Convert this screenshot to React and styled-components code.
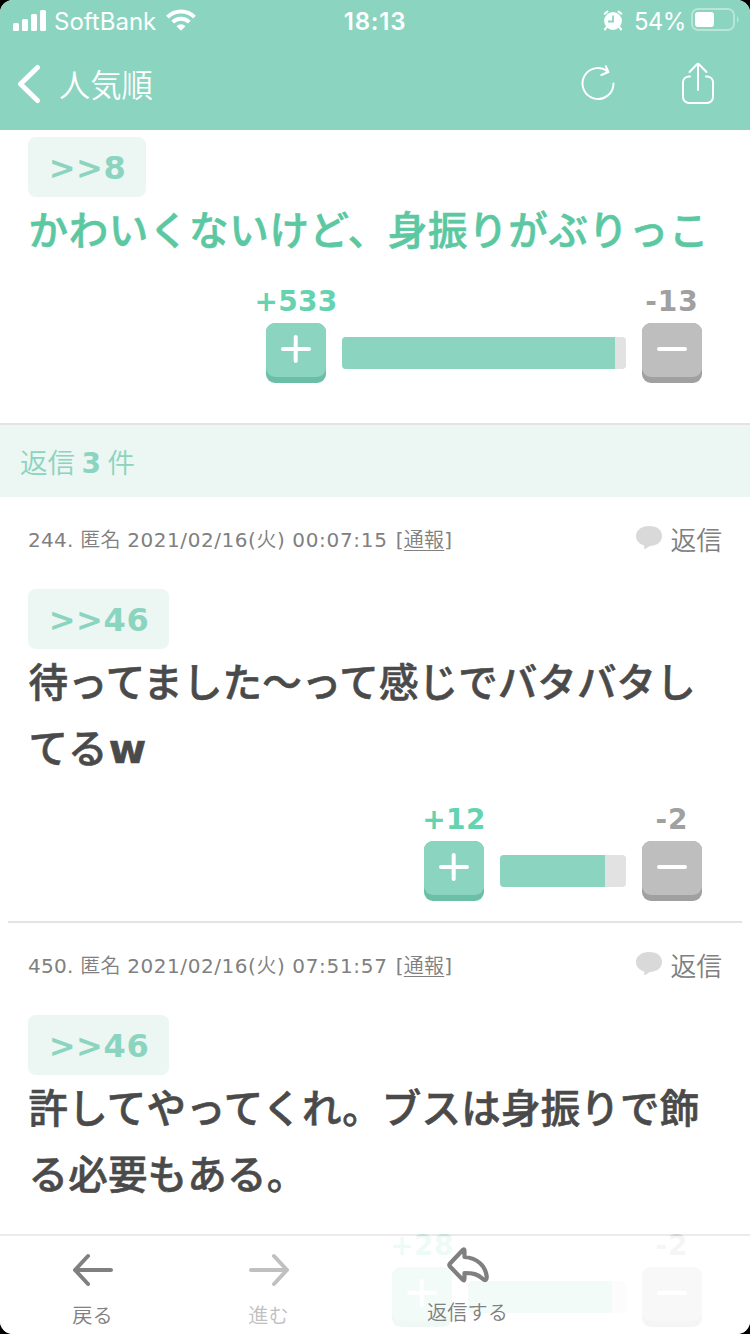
import React from "react";
import styled, { createGlobalStyle } from "styled-components";

const mint = "#8bd4bf";
const pale = "#ecf6f3";

const GlobalStyle = createGlobalStyle`
  * { box-sizing: border-box; }
  body { margin: 0; background: #000; font-family: "DejaVu Sans", "Noto Sans CJK JP", sans-serif; }
`;

const Screen = styled.div`
  position: relative;
  width: 750px;
  height: 1334px;
  border-radius: 13px;
  overflow: hidden;
  background: #fff;
`;

const Header = styled.header`
  height: 130px;
  background: ${mint};
  color: #fff;
`;

const StatusBar = styled.div`
  display: grid;
  grid-template-columns: 1fr auto 1fr;
  align-items: center;
  height: 40px;
  padding: 0 11px 0 13px;
  font-family: Inter, sans-serif;
  font-size: 24px;
  line-height: 38px;
`;

const StatusGroup = styled.div`
  display: flex;
  align-items: center;
  justify-content: ${(p) => (p.$end ? "flex-end" : "flex-start")};
  svg { display: block; flex: none; margin-top: -2px; }
`;

const StatusText = styled.span`
  margin: 3px ${(p) => p.$right}px 0 ${(p) => p.$left}px;
  letter-spacing: ${(p) => p.$spacing}px;
`;

const Clock = styled.div`
  margin: 2px 2px 0 0;
  font-weight: 600;
  font-size: 24px;
  letter-spacing: 0.8px;
`;

const NavBar = styled.nav`
  display: flex;
  align-items: center;
  height: 90px;
  padding: 0 35px 2px 17px;
  svg { display: block; }
`;

const NavTitle = styled.span`
  flex: 1;
  margin: -1px 0 0 18px;
  font: 350 31.3px/46px "Noto Sans CJK JP", sans-serif;
`;

const NavIcon = styled.div`
  margin-left: ${(p) => p.$left || 0}px;
`;

const TopComment = styled.section`
  height: 295px;
  padding: 7px 0 0 28px;
  border-bottom: 2px solid #e3e3e3;
`;

const ReplyCount = styled.h2`
  height: 72px;
  margin: 0;
  padding: 0 0 0 20px;
  background: ${pale};
  color: ${mint};
  font: 350 27.5px/73px "Noto Sans CJK JP", sans-serif;
  b {
    margin: 0 6.5px;
    font: bold 28px "DejaVu Sans", sans-serif;
  }
`;

const Reply = styled.article`
  height: 426px;
  margin: 0 8px;
  padding: 0 0 0 20px;
  border-bottom: 2px solid #e3e3e3;
`;

const Meta = styled.div`
  display: flex;
  align-items: center;
  height: 83px;
  margin-bottom: 9px;
  padding-right: 20px;
  color: #808080;
  font-size: 20px;
  white-space: nowrap;
`;

const MetaText = styled.span`
  flex: 1;
  letter-spacing: 0.25px;
`;

const Kanji = styled.span`
  font-weight: 350;
  font-family: "Noto Sans CJK JP", sans-serif;
`;

const DateText = styled.span`
  letter-spacing: 0.55px;
`;

const TimeText = styled.span`
  margin-right: 1px;
  letter-spacing: 0.7px;
`;

const ReportLink = styled(Kanji)`
  text-decoration: underline 1px;
  text-underline-offset: 3px;
`;

const ReplyLink = styled.span`
  display: flex;
  align-items: center;
  gap: 7px;
  font: 350 25.8px/40px "Noto Sans CJK JP", sans-serif;
  svg { margin-top: -2px; }
`;

const Anchor = styled.div`
  width: ${(p) => p.$width}px;
  height: 60px;
  padding-left: 20.7px;
  border-radius: 8px;
  background: ${pale};
  color: ${mint};
  font-size: 32px;
  font-weight: bold;
  line-height: 62px;
  letter-spacing: 0.6px;
`;

const Body = styled.p`
  margin: -2px 0 2px 0.5px;
  color: ${(p) => p.$color || "#4a4a4a"};
  font: 500 39.5px/66px "Noto Sans CJK JP", sans-serif;
  -webkit-text-stroke: 0.6px currentColor;
  letter-spacing: ${(p) => p.$spacing || 0}px;
  white-space: pre-line;
  b {
    margin-left: 1px;
    font: bold 40.5px/1 "DejaVu Sans", sans-serif;
  }
`;

const VoteRow = styled.div`
  display: flex;
  justify-content: flex-end;
  gap: 16px;
  height: 120px;
  padding-right: ${(p) => p.$right}px;
`;

const VoteColumn = styled.div`
  display: flex;
  flex-direction: column;
  align-items: center;
  width: 60px;
`;

const VoteCount = styled.span`
  height: 60px;
  padding-top: 22px;
  color: ${(p) => (p.$minus ? "#a0a0a0" : "#65d3af")};
  font-size: 28px;
  font-weight: bold;
  line-height: 33px;
  letter-spacing: ${(p) => (p.$minus ? 0.9 : 0.3)}px;
  white-space: nowrap;
`;

const VoteButton = styled.button`
  width: 60px;
  height: 60px;
  padding: 0 0 6px;
  border: 0;
  border-radius: 9px;
  background: ${(p) => (p.$minus ? "#a0a0a0" : "#6cbfa7")};
`;

const ButtonFace = styled.span`
  display: flex;
  justify-content: center;
  height: 54px;
  padding-top: 11px;
  border-radius: 9px;
  background: ${(p) => (p.$minus ? "#bebebe" : mint)};
`;

const Bar = styled.div`
  width: ${(p) => p.$width}px;
  height: 32px;
  margin-top: 74px;
  border-radius: 4px;
  background: #e2e2e2;
  overflow: hidden;
`;

const BarFill = styled.div`
  width: ${(p) => p.$width}px;
  height: 100%;
  background: ${mint};
`;

const Toolbar = styled.footer`
  position: absolute;
  inset: auto 0 0 0;
  display: flex;
  height: 100px;
  padding-left: 5px;
  border-top: 2px solid rgba(228, 228, 228, 0.75);
  background: rgba(255, 255, 255, 0.89);
  background-clip: padding-box;
`;

const Tool = styled.div`
  display: flex;
  flex-direction: column;
  align-items: center;
  width: ${(p) => p.$width}px;
  padding-top: ${(p) => p.$top}px;
  color: ${(p) => p.$color};
  font: 350 20.2px/30px "Noto Sans CJK JP", sans-serif;
  svg { display: block; margin-bottom: ${(p) => p.$gap}px; }
`;

function VoteControl({ minus, count }) {
  return (
    <VoteColumn>
      <VoteCount $minus={minus}>{count}</VoteCount>
      <VoteButton $minus={minus}>
        <ButtonFace $minus={minus}>
          <svg width="30" height="30" viewBox="0 0 30 30" stroke="#fff" strokeWidth="4" strokeLinecap="round">
            <path d={minus ? "M2 15h26" : "M2 15h26M14.700 3v24"} />
          </svg>
        </ButtonFace>
      </VoteButton>
    </VoteColumn>
  );
}

function Votes({ plus, minus, width, fill, right = 40 }) {
  return (
    <VoteRow $right={right}>
      <VoteControl count={plus} />
      <Bar $width={width}><BarFill $width={fill} /></Bar>
      <VoteControl minus count={minus} />
    </VoteRow>
  );
}

function ReplyItem({ number, time, text, spacing, ...votes }) {
  return (
    <Reply>
      <Meta>
        <MetaText>
          {number}. <Kanji>匿名</Kanji> <DateText>2021/02/16(<Kanji>火</Kanji>) </DateText>
          <TimeText>{time} </TimeText>[<ReportLink>通報</ReportLink>]
        </MetaText>
        <ReplyLink>
          <svg width="27" height="24" viewBox="0 0 27 24" fill="#d9d9d9">
            <path d="M13 0C5 0 0 4.500 0 10c0 4.500 3 8 8.200 9.400.4 1.400.1 2.600-.5 3.900 2.200-.7 4.200-1.700 6-3.300C21.500 19.700 26 15.500 26 10 26 4 21.500 0 13 0Z" />
          </svg>
          返信
        </ReplyLink>
      </Meta>
      <Anchor $width={141}>&gt;&gt;46</Anchor>
      <Body $spacing={spacing}>{text}</Body>
      <Votes {...votes} />
    </Reply>
  );
}

export default function App() {
  return (
    <>
      <GlobalStyle />
      <Screen>
        <Header>
          <StatusBar>
            <StatusGroup>
              <svg width="33" height="22" viewBox="0 0 33 22" fill="#fff">
                <rect x="0" y="14" width="6" height="8" rx="1.5" />
                <rect x="9" y="10" width="6" height="12" rx="1.5" />
                <rect x="18" y="5" width="6" height="17" rx="1.5" />
                <rect x="27" y="1" width="6" height="21" rx="1.5" />
              </svg>
              <StatusText $left={8} $right={10} $spacing={0}>SoftBank</StatusText>
              <svg width="30" height="22" viewBox="0 0 30 22" fill="none" stroke="#fff" strokeWidth="4">
                <path d="M1.500 8.100a19.100 19.100 0 0 1 27 0" />
                <path d="M6.700 13.200a11.700 11.700 0 0 1 16.600 0" />
                <path d="M10.500 17.200a6.400 6.400 0 0 1 9 0L15 21.800Z" fill="#fff" stroke="none" />
              </svg>
            </StatusGroup>
            <Clock>18:13</Clock>
            <StatusGroup $end>
              <svg width="20" height="22" viewBox="0 0 20 22" fill="none">
                <circle cx="10" cy="12" r="8.900" fill="#fff" />
                <path d="M1.800 4.600 4.400 2.700M18.200 4.600 15.600 2.700M3.200 18.500 2 20.300M16.800 18.500 18 20.300" stroke="#fff" strokeWidth="2.200" strokeLinecap="round" />
                <path d="M10 6.500v6H5" stroke={mint} strokeWidth="1.800" />
              </svg>
              <StatusText $left={10.5} $right={5.5} $spacing={-0.7}>54%</StatusText>
              <svg width="48" height="24" viewBox="0 0 48 24">
                <rect x="1" y="1" width="42" height="21" rx="6" fill="none" stroke="#fff" strokeOpacity=".4" strokeWidth="2" />
                <rect x="4" y="4" width="19" height="15" rx="3" fill="#fff" />
                <path d="M46 8c2.200 1.500 2.200 5.500 0 7Z" fill="#fff" fillOpacity=".4" />
              </svg>
            </StatusGroup>
          </StatusBar>
          <NavBar>
            <svg width="24" height="40" viewBox="0 0 24 40" fill="none" stroke="#fff" strokeWidth="5" strokeLinecap="round" strokeLinejoin="round">
              <path d="M20.500 3.500 3.500 20 20.500 36.500" />
            </svg>
            <NavTitle>人気順</NavTitle>
            <NavIcon>
              <svg width="36" height="42" viewBox="0 0 36 42" fill="none" stroke="#fff" strokeWidth="2" strokeLinecap="round" strokeLinejoin="round">
                <path d="M32.500 20.500A15.500 15.500 0 1 1 26.800 8.500M24.800 3.200 27.400 9 20.400 12" />
              </svg>
            </NavIcon>
            <NavIcon $left={64}>
              <svg width="34" height="44" viewBox="0 0 34 44" fill="none" stroke="#fff" strokeWidth="2" strokeLinecap="round" strokeLinejoin="round">
                <path d="M17 28V2.500M8.500 10 16 2.300Q17 1.500 18 2.300L25.500 10M9 14.500H7.500A6 6 0 0 0 2 20.500V35A6 6 0 0 0 8 41h18a6 6 0 0 0 6-6V20.500a6 6 0 0 0-5.500-6H25" />
              </svg>
            </NavIcon>
          </NavBar>
        </Header>
        <TopComment>
          <Anchor $width={118}>&gt;&gt;8</Anchor>
          <Body $color="#5bc8a2" $spacing={0.65}>かわいくないけど、身振りがぶりっこ</Body>
          <Votes plus="+533" minus="-13" width={284} fill={273} right={48} />
        </TopComment>
        <ReplyCount>返信<b>3</b>件</ReplyCount>
        <ReplyItem number="244" time="00:07:15" text={<>待ってました〜って感じでバタバタし{"\n"}てる<b>w</b></>} spacing={0.1} plus="+12" minus="-2" width={126} fill={105} />
        <ReplyItem number="450" time="07:51:57" text={"許してやってくれ。ブスは身振りで飾\nる必要もある。"} spacing={0.2} plus="+28" minus="-2" width={158} fill={144} />
        <Toolbar>
          <Tool $width={175} $top={17} $gap={13} $color="#808080">
            <svg width="42" height="34" viewBox="0 0 42 34" fill="none" stroke="currentColor" strokeWidth="4" strokeLinecap="round" strokeLinejoin="round">
              <path d="M39 17H3M16 3 3 17l13 14" />
            </svg>
            戻る
          </Tool>
          <Tool $width={177} $top={17} $gap={13} $color="#c0c0c0">
            <svg width="42" height="34" viewBox="0 0 42 34" fill="none" stroke="currentColor" strokeWidth="4" strokeLinecap="round" strokeLinejoin="round">
              <path d="M3 17h36M26 3l13 14-13 14" />
            </svg>
            進む
          </Tool>
          <Tool $width={221} $top={10} $gap={13} $color="#808080">
            <svg width="44" height="38" viewBox="0 0 44 38" fill="none" stroke="currentColor" strokeWidth="4.200" strokeLinejoin="round">
              <path d="M17 3.800Q18.500 2.500 18.500 5V11C31 12 39.500 19.500 40.700 30.500C41 34.500 39 35 37 33C31.500 28 27 27 18.500 27V32.500Q18.500 35.500 16.500 33.500L3.800 20.300Q2.800 19 3.800 17.800Z" />
            </svg>
            返信する
          </Tool>
        </Toolbar>
      </Screen>
    </>
  );
}
